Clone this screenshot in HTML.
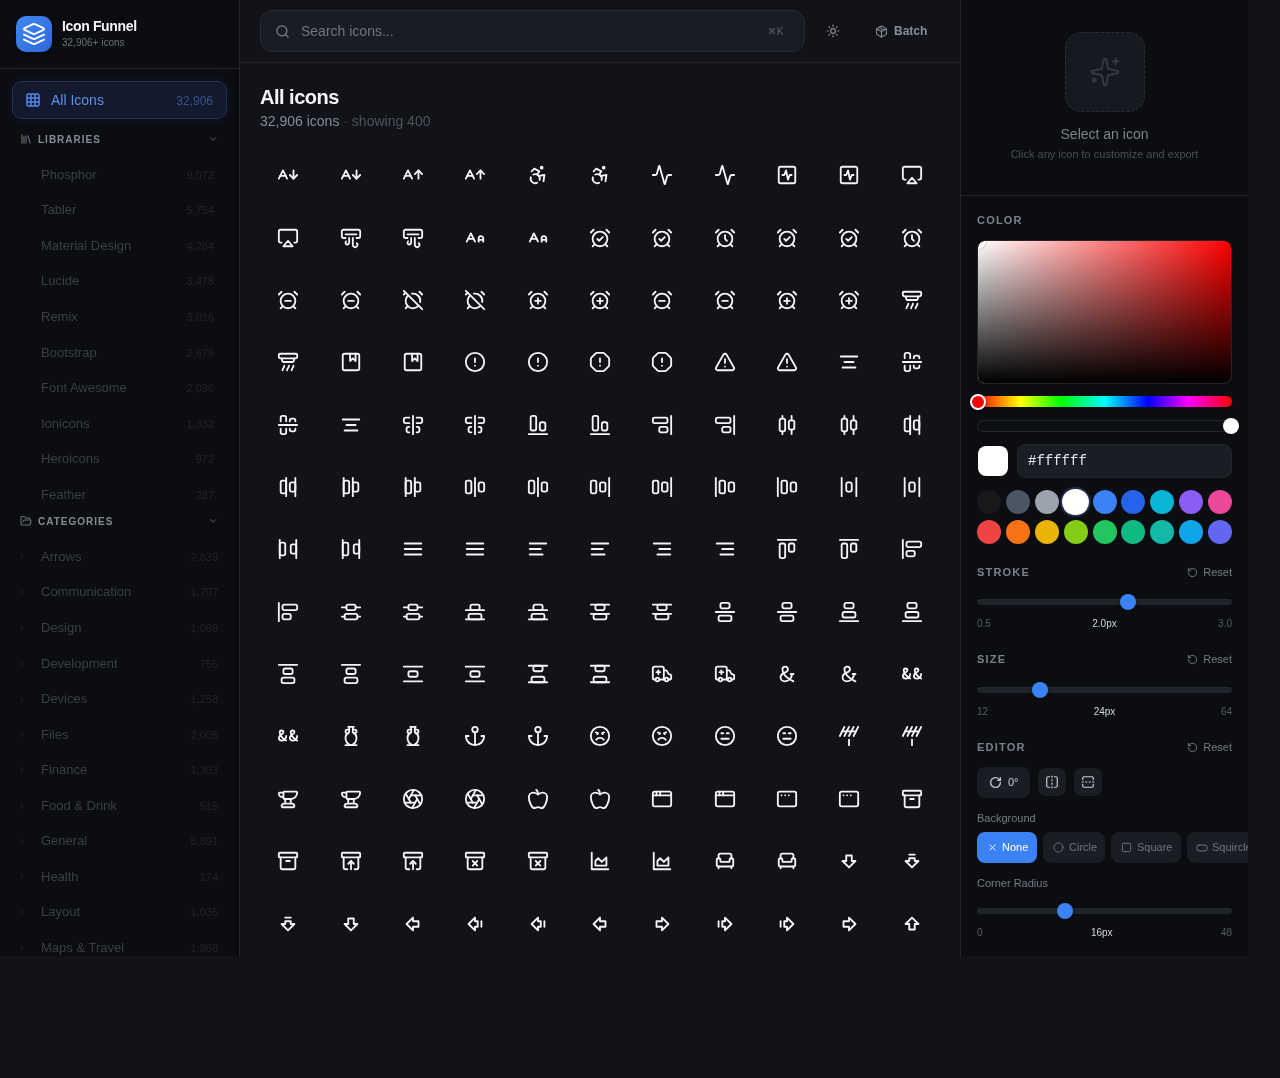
<!DOCTYPE html><html><head><meta charset="utf-8"><style>
*{box-sizing:border-box;margin:0;padding:0}
html,body{width:1280px;height:1078px;overflow:hidden;background:#121318;font-family:"Liberation Sans",sans-serif;color:#e5e7eb}
.app{position:absolute;left:0;top:0;width:1248px;height:956px;overflow:hidden;will-change:transform}
.side{position:absolute;left:0;top:0;width:240px;height:956px;background:#0c0d11;border-right:1px solid #23252b;overflow:hidden}
.shead{position:absolute;left:0;top:0;width:239px;height:69px;border-bottom:1px solid #23252b}
.logo{position:absolute;left:16px;top:16px;width:36px;height:36px;border-radius:10px;background:linear-gradient(135deg,#3f86f0,#2f68d8);box-shadow:0 2px 6px rgba(0,0,0,.5);display:flex;align-items:center;justify-content:center;color:#fff}
.ttl{position:absolute;left:62px;top:18px;font-size:14px;font-weight:700;color:#f3f4f6;line-height:16px;letter-spacing:-0.35px}
.sub{position:absolute;left:62px;top:37px;font-size:10px;color:#6b6f79;line-height:12px}
.allbtn{position:absolute;left:12px;top:81px;width:215px;height:38px;border-radius:10px;background:#131a2d;border:1px solid #263352;box-shadow:0 0 12px rgba(37,99,235,.12)}
.allbtn svg{position:absolute;left:12px;top:10px}
.allbtn .t{position:absolute;left:38px;top:10px;font-size:14px;color:#5b8ff0;line-height:16px}
.allbtn .c{position:absolute;right:13px;top:13px;font-size:12px;color:#36528a;line-height:13px}
.sech{position:absolute;left:20px;width:200px;height:16px}
.sech svg.i{position:absolute;left:0;top:2px}
.sech .t{position:absolute;left:18px;top:2px;font-size:10px;font-weight:700;letter-spacing:1px;color:#868a94;line-height:12px}
.sech svg.ch{position:absolute;left:188px;top:2px}
.row{position:absolute;left:0;width:239px;height:35.5px}
.row .t{position:absolute;left:41px;top:9px;font-size:13px;color:#3b3e45;line-height:16px;white-space:nowrap}
.row .c{position:absolute;top:11px;font-size:11px;color:#212328;line-height:13px}
.row svg{position:absolute;left:18px;top:13px}
.main{position:absolute;left:240px;top:0;width:720px;height:956px;background:#121318;overflow:hidden}
.top{position:absolute;left:0;top:0;width:720px;height:63px;border-bottom:1px solid #23252b}
.search{position:absolute;left:20px;top:10px;width:545px;height:42px;border-radius:12px;background:#1a1c23;border:1px solid #272930}
.search svg{position:absolute;left:14px;top:13px}
.search .ph{position:absolute;left:40px;top:12px;font-size:14px;color:#71757f;line-height:16px}
.search .k{position:absolute;right:20px;top:15px;font-size:10px;color:#5b5f69;line-height:12px;letter-spacing:.5px}
.sun{position:absolute;left:586px;top:24px;color:#8a8e98}
.batch{position:absolute;left:635px;top:24px;color:#8a8e98}
.batch .t{position:absolute;left:19px;top:0px;font-size:12px;font-weight:700;line-height:14px}
h1{position:absolute;left:20px;top:83px;font-size:20px;line-height:28px;font-weight:700;color:#f3f4f6;letter-spacing:-0.5px}
.cnt{position:absolute;left:20px;top:111px;font-size:14px;line-height:20px;color:#878b95;white-space:nowrap}
.cnt span{color:#4f535a}
.grid{position:absolute;left:20px;top:147px;width:680px}
.ic{position:absolute;width:22px;height:22px;color:#f5f5f7}
.ic svg{display:block}
.panel{position:absolute;left:960px;top:0;width:288px;height:956px;background:#0c0d11;border-left:1px solid #23252b;overflow:hidden}
.prev{position:absolute;left:0;top:0;width:287px;height:196px;border-bottom:1px solid #23252b}
.pbox{position:absolute;left:104px;top:32px;width:80px;height:80px;border-radius:16px;background:#161920;border:1px dashed #2b2e37;color:#3b3e48}
.pbox svg{position:absolute;left:23px;top:23px}
.sel{position:absolute;left:0;width:287px;text-align:center;top:125px;font-size:14px;line-height:18px;color:#7e828d}
.clk{position:absolute;left:0;width:287px;text-align:center;top:147px;font-size:11px;line-height:14px;color:#4a4e57}
.lbl{position:absolute;left:16px;font-size:11px;font-weight:700;letter-spacing:1.2px;color:#7d818b;line-height:13px}
.reset{position:absolute;right:16px;font-size:11px;color:#757983;line-height:13px}
.reset svg{position:absolute;left:-16px;top:1px}
.sat{position:absolute;left:16px;top:240px;width:255px;height:144px;border-radius:8px;overflow:hidden;border:1px solid #2a2226;background:linear-gradient(to top,#000,rgba(0,0,0,0)),linear-gradient(to right,#fff,#f00);background-origin:padding-box;background-clip:padding-box}
.hue{position:absolute;left:16px;top:396px;width:255px;height:11px;border-radius:6px;background:linear-gradient(to right,#f00 0%,#ff0 17%,#0f0 33%,#0ff 50%,#00f 67%,#f0f 83%,#f00 100%)}
.hknob{position:absolute;left:9px;top:394px;width:16px;height:16px;border-radius:50%;background:#f00;border:2px solid #fff;box-shadow:0 1px 3px rgba(0,0,0,.5)}
.alpha{position:absolute;left:16px;top:420px;width:255px;height:12px;border-radius:6px;background:#0e0f13;border:1px solid #24262d}
.aknob{position:absolute;left:262px;top:418px;width:16px;height:16px;border-radius:50%;background:#fff;box-shadow:0 1px 3px rgba(0,0,0,.5)}
.swatch{position:absolute;left:17px;top:446px;width:30px;height:30px;border-radius:8px;background:#fff}
.hex{position:absolute;left:56px;top:444px;width:215px;height:34px;border-radius:8px;background:#1b1d24;border:1px solid #22242b;font-family:"Liberation Mono",monospace;font-size:14px;color:#e5e7eb;padding-left:10px;line-height:32px}
.sw{position:absolute;width:24px;height:24px;border-radius:50%}
.track{position:absolute;left:16px;width:255px;height:6px;border-radius:3px;background:#22242b}
.knob{position:absolute;width:16px;height:16px;border-radius:50%;background:#3b82f6;box-shadow:0 1px 3px rgba(0,0,0,.4)}
.rng{position:absolute;left:16px;width:255px;display:flex;justify-content:space-between;font-size:10px;line-height:12px;color:#575b65}
.rng b{font-weight:400;color:#d1d5db}
.eb{position:absolute;border-radius:8px;background:#1b1d24;color:#c9ccd3}
.eb svg{position:absolute}
.elbl{position:absolute;left:16px;font-size:11px;color:#767a84;line-height:13px}
.bgb{position:absolute;top:832px;height:31px;border-radius:8px;background:#1b1d24;color:#70747e;font-size:11px;line-height:31px;white-space:nowrap}
.bgb svg{position:absolute;top:10px}
.bgb span{position:absolute;top:0}
</style></head><body><div class="app">
<div class="side"><div class="shead">
<div class="logo"><svg width="24" height="24" viewBox="0 0 24 24" fill="none" stroke="#fff" stroke-width="2" stroke-linecap="round" stroke-linejoin="round" ><path d="m12.83 2.18a2 2 0 0 0-1.66 0L2.6 6.08a1 1 0 0 0 0 1.83l8.58 3.91a2 2 0 0 0 1.66 0l8.58-3.9a1 1 0 0 0 0-1.83Z"/><path d="m22 17.65-9.17 4.16a2 2 0 0 1-1.66 0L2 17.65"/><path d="m22 12.65-9.17 4.16a2 2 0 0 1-1.66 0L2 12.65"/></svg></div>
<div class="ttl">Icon Funnel</div><div class="sub">32,906+ icons</div></div>
<div class="allbtn"><svg width="16" height="16" viewBox="0 0 24 24" fill="none" stroke="#4f86ee" stroke-width="2.2" stroke-linecap="round" stroke-linejoin="round" ><rect width="18" height="18" x="3" y="3" rx="2"/><path d="M3 9h18"/><path d="M3 15h18"/><path d="M9 3v18"/><path d="M15 3v18"/></svg><div class="t">All Icons</div><div class="c">32,906</div></div>
<div class="sech" style="top:132px"><svg width="12" height="12" viewBox="0 0 24 24" fill="none" stroke="#5a5f6b" stroke-width="2.6" stroke-linecap="round" stroke-linejoin="round" class="i" style="top:1px"><path d="m16 6 4 14"/><path d="M12 6v14"/><path d="M8 8v12"/><path d="M4 4v16"/></svg><div class="t">LIBRARIES</div><svg width="10" height="10" viewBox="0 0 24 24" fill="none" stroke="#5d6169" stroke-width="2.4" stroke-linecap="round" stroke-linejoin="round" class="ch"><path d="m6 9 6 6 6-6"/></svg></div>
<div class="row" style="top:157.5px"><div class="t">Phosphor</div><div class="c" style="right:25px">9,072</div></div>
<div class="row" style="top:193.1px"><div class="t">Tabler</div><div class="c" style="right:25px">5,754</div></div>
<div class="row" style="top:228.7px"><div class="t">Material Design</div><div class="c" style="right:25px">4,284</div></div>
<div class="row" style="top:264.3px"><div class="t">Lucide</div><div class="c" style="right:25px">3,478</div></div>
<div class="row" style="top:299.9px"><div class="t">Remix</div><div class="c" style="right:25px">3,016</div></div>
<div class="row" style="top:335.5px"><div class="t">Bootstrap</div><div class="c" style="right:25px">2,679</div></div>
<div class="row" style="top:371.1px"><div class="t">Font Awesome</div><div class="c" style="right:25px">2,036</div></div>
<div class="row" style="top:406.70000000000005px"><div class="t">Ionicons</div><div class="c" style="right:25px">1,332</div></div>
<div class="row" style="top:442.3px"><div class="t">Heroicons</div><div class="c" style="right:25px">972</div></div>
<div class="row" style="top:477.90000000000003px"><div class="t">Feather</div><div class="c" style="right:25px">287</div></div>
<div class="sech" style="top:514px"><svg width="12" height="12" viewBox="0 0 24 24" fill="none" stroke="#6a6e78" stroke-width="2.2" stroke-linecap="round" stroke-linejoin="round" class="i" style="top:1px"><path d="m6 14 1.5-2.9A2 2 0 0 1 9.24 10H20a2 2 0 0 1 1.94 2.5l-1.54 6a2 2 0 0 1-1.95 1.5H4a2 2 0 0 1-2-2V5a2 2 0 0 1 2-2h3.9a2 2 0 0 1 1.69.9l.81 1.2a2 2 0 0 0 1.67.9H18a2 2 0 0 1 2 2v2"/></svg><div class="t">CATEGORIES</div><svg width="10" height="10" viewBox="0 0 24 24" fill="none" stroke="#5d6169" stroke-width="2.4" stroke-linecap="round" stroke-linejoin="round" class="ch"><path d="m6 9 6 6 6-6"/></svg></div>
<div class="row" style="top:539.9px"><svg width="8" height="8" viewBox="0 0 24 24" fill="none" stroke="#2a2c33" stroke-width="2" stroke-linecap="round" stroke-linejoin="round" ><path d="m9 18 6-6-6-6"/></svg><div class="t">Arrows</div><div class="c" style="right:21px">2,839</div></div>
<div class="row" style="top:575.4499999999999px"><svg width="8" height="8" viewBox="0 0 24 24" fill="none" stroke="#2a2c33" stroke-width="2" stroke-linecap="round" stroke-linejoin="round" ><path d="m9 18 6-6-6-6"/></svg><div class="t">Communication</div><div class="c" style="right:21px">1,707</div></div>
<div class="row" style="top:611.0px"><svg width="8" height="8" viewBox="0 0 24 24" fill="none" stroke="#2a2c33" stroke-width="2" stroke-linecap="round" stroke-linejoin="round" ><path d="m9 18 6-6-6-6"/></svg><div class="t">Design</div><div class="c" style="right:21px">1,009</div></div>
<div class="row" style="top:646.55px"><svg width="8" height="8" viewBox="0 0 24 24" fill="none" stroke="#2a2c33" stroke-width="2" stroke-linecap="round" stroke-linejoin="round" ><path d="m9 18 6-6-6-6"/></svg><div class="t">Development</div><div class="c" style="right:21px">755</div></div>
<div class="row" style="top:682.0999999999999px"><svg width="8" height="8" viewBox="0 0 24 24" fill="none" stroke="#2a2c33" stroke-width="2" stroke-linecap="round" stroke-linejoin="round" ><path d="m9 18 6-6-6-6"/></svg><div class="t">Devices</div><div class="c" style="right:21px">1,258</div></div>
<div class="row" style="top:717.65px"><svg width="8" height="8" viewBox="0 0 24 24" fill="none" stroke="#2a2c33" stroke-width="2" stroke-linecap="round" stroke-linejoin="round" ><path d="m9 18 6-6-6-6"/></svg><div class="t">Files</div><div class="c" style="right:21px">2,005</div></div>
<div class="row" style="top:753.1999999999999px"><svg width="8" height="8" viewBox="0 0 24 24" fill="none" stroke="#2a2c33" stroke-width="2" stroke-linecap="round" stroke-linejoin="round" ><path d="m9 18 6-6-6-6"/></svg><div class="t">Finance</div><div class="c" style="right:21px">1,303</div></div>
<div class="row" style="top:788.75px"><svg width="8" height="8" viewBox="0 0 24 24" fill="none" stroke="#2a2c33" stroke-width="2" stroke-linecap="round" stroke-linejoin="round" ><path d="m9 18 6-6-6-6"/></svg><div class="t">Food &amp; Drink</div><div class="c" style="right:21px">515</div></div>
<div class="row" style="top:824.3px"><svg width="8" height="8" viewBox="0 0 24 24" fill="none" stroke="#2a2c33" stroke-width="2" stroke-linecap="round" stroke-linejoin="round" ><path d="m9 18 6-6-6-6"/></svg><div class="t">General</div><div class="c" style="right:21px">8,891</div></div>
<div class="row" style="top:859.8499999999999px"><svg width="8" height="8" viewBox="0 0 24 24" fill="none" stroke="#2a2c33" stroke-width="2" stroke-linecap="round" stroke-linejoin="round" ><path d="m9 18 6-6-6-6"/></svg><div class="t">Health</div><div class="c" style="right:21px">174</div></div>
<div class="row" style="top:895.4px"><svg width="8" height="8" viewBox="0 0 24 24" fill="none" stroke="#2a2c33" stroke-width="2" stroke-linecap="round" stroke-linejoin="round" ><path d="m9 18 6-6-6-6"/></svg><div class="t">Layout</div><div class="c" style="right:21px">1,035</div></div>
<div class="row" style="top:930.9499999999999px"><svg width="8" height="8" viewBox="0 0 24 24" fill="none" stroke="#2a2c33" stroke-width="2" stroke-linecap="round" stroke-linejoin="round" ><path d="m9 18 6-6-6-6"/></svg><div class="t">Maps &amp; Travel</div><div class="c" style="right:21px">1,868</div></div>
<div style="position:absolute;left:234px;top:69px;width:5px;height:887px;background:#0a0b0d"></div>
</div>
<div class="main"><div class="top">
<div class="search"><svg width="15" height="15" viewBox="0 0 24 24" fill="none" stroke="#7c808a" stroke-width="2" stroke-linecap="round" stroke-linejoin="round" ><circle cx="11" cy="11" r="8"/><path d="m21 21-4.3-4.3"/></svg><div class="ph">Search icons...</div><div class="k"><span style="font-size:7.5px;vertical-align:1px">&#8984;</span>K</div></div>
<div class="sun"><svg width="14" height="14" viewBox="0 0 24 24" fill="none" stroke="#8a8e98" stroke-width="2" stroke-linecap="round" stroke-linejoin="round" ><circle cx="12" cy="12" r="4"/><path d="M12 2v2"/><path d="M12 20v2"/><path d="m4.93 4.93 1.41 1.41"/><path d="m17.66 17.66 1.41 1.41"/><path d="M2 12h2"/><path d="M20 12h2"/><path d="m6.34 17.66-1.41 1.41"/><path d="m19.07 4.93-1.41 1.41"/></svg></div>
<div class="batch"><svg width="13" height="13" viewBox="0 0 24 24" fill="none" stroke="#8a8e98" stroke-width="2" stroke-linecap="round" stroke-linejoin="round" ><path d="m7.5 4.27 9 5.15"/><path d="M21 8a2 2 0 0 0-1-1.73l-7-4a2 2 0 0 0-2 0l-7 4A2 2 0 0 0 3 8v8a2 2 0 0 0 1 1.73l7 4a2 2 0 0 0 2 0l7-4A2 2 0 0 0 21 16Z"/><path d="m3.3 7 8.7 5 8.7-5"/><path d="M12 22V12"/></svg><div class="t">Batch</div></div>
</div>
<h1>All icons</h1><div class="cnt">32,906 icons<span style="color:#3a3d44"> &middot; </span><span>showing 400</span></div>
<div class="grid">
<div class="ic" style="left:17.18px;top:17.18px"><svg width="22" height="22" viewBox="0 0 24 24" fill="none" stroke="currentColor" stroke-width="2" stroke-linecap="round" stroke-linejoin="round" ><path d="M3.5 13h6"/><path d="m2 16 4.5-9 4.5 9"/><path d="M18 7v9"/><path d="m14 12 4 4 4-4"/></svg></div>
<div class="ic" style="left:79.55px;top:17.18px"><svg width="22" height="22" viewBox="0 0 24 24" fill="none" stroke="currentColor" stroke-width="2" stroke-linecap="round" stroke-linejoin="round" ><path d="M3.5 13h6"/><path d="m2 16 4.5-9 4.5 9"/><path d="M18 7v9"/><path d="m14 12 4 4 4-4"/></svg></div>
<div class="ic" style="left:141.91px;top:17.18px"><svg width="22" height="22" viewBox="0 0 24 24" fill="none" stroke="currentColor" stroke-width="2" stroke-linecap="round" stroke-linejoin="round" ><path d="M3.5 13h6"/><path d="m2 16 4.5-9 4.5 9"/><path d="M18 16V7"/><path d="m14 11 4-4 4 4"/></svg></div>
<div class="ic" style="left:204.27px;top:17.18px"><svg width="22" height="22" viewBox="0 0 24 24" fill="none" stroke="currentColor" stroke-width="2" stroke-linecap="round" stroke-linejoin="round" ><path d="M3.5 13h6"/><path d="m2 16 4.5-9 4.5 9"/><path d="M18 16V7"/><path d="m14 11 4-4 4 4"/></svg></div>
<div class="ic" style="left:266.64px;top:17.18px"><svg width="22" height="22" viewBox="0 0 24 24" fill="none" stroke="currentColor" stroke-width="2" stroke-linecap="round" stroke-linejoin="round" ><circle cx="16" cy="4" r="1"/><path d="m18 19 1-7-6 1"/><path d="m5 8 3-3 5.5 3-2.36 3.5"/><path d="M4.24 14.5a5 5 0 0 0 6.88 6"/><path d="M13.76 17.5a5 5 0 0 0-6.88-6"/></svg></div>
<div class="ic" style="left:329.00px;top:17.18px"><svg width="22" height="22" viewBox="0 0 24 24" fill="none" stroke="currentColor" stroke-width="2" stroke-linecap="round" stroke-linejoin="round" ><circle cx="16" cy="4" r="1"/><path d="m18 19 1-7-6 1"/><path d="m5 8 3-3 5.5 3-2.36 3.5"/><path d="M4.24 14.5a5 5 0 0 0 6.88 6"/><path d="M13.76 17.5a5 5 0 0 0-6.88-6"/></svg></div>
<div class="ic" style="left:391.36px;top:17.18px"><svg width="22" height="22" viewBox="0 0 24 24" fill="none" stroke="currentColor" stroke-width="2" stroke-linecap="round" stroke-linejoin="round" ><path d="M22 12h-2.48a2 2 0 0 0-1.93 1.46l-2.35 8.36a.25.25 0 0 1-.48 0L9.24 2.18a.25.25 0 0 0-.48 0l-2.35 8.36A2 2 0 0 1 4.49 12H2"/></svg></div>
<div class="ic" style="left:453.73px;top:17.18px"><svg width="22" height="22" viewBox="0 0 24 24" fill="none" stroke="currentColor" stroke-width="2" stroke-linecap="round" stroke-linejoin="round" ><path d="M22 12h-2.48a2 2 0 0 0-1.93 1.46l-2.35 8.36a.25.25 0 0 1-.48 0L9.24 2.18a.25.25 0 0 0-.48 0l-2.35 8.36A2 2 0 0 1 4.49 12H2"/></svg></div>
<div class="ic" style="left:516.09px;top:17.18px"><svg width="22" height="22" viewBox="0 0 24 24" fill="none" stroke="currentColor" stroke-width="2" stroke-linecap="round" stroke-linejoin="round" ><rect width="18" height="18" x="3" y="3" rx="2"/><path d="M17 12h-2l-2 5-2-10-2 5H7"/></svg></div>
<div class="ic" style="left:578.45px;top:17.18px"><svg width="22" height="22" viewBox="0 0 24 24" fill="none" stroke="currentColor" stroke-width="2" stroke-linecap="round" stroke-linejoin="round" ><rect width="18" height="18" x="3" y="3" rx="2"/><path d="M17 12h-2l-2 5-2-10-2 5H7"/></svg></div>
<div class="ic" style="left:640.82px;top:17.18px"><svg width="22" height="22" viewBox="0 0 24 24" fill="none" stroke="currentColor" stroke-width="2" stroke-linecap="round" stroke-linejoin="round" ><path d="M5 17H4a2 2 0 0 1-2-2V5a2 2 0 0 1 2-2h16a2 2 0 0 1 2 2v10a2 2 0 0 1-2 2h-1"/><path d="m12 15 5 6H7Z"/></svg></div>
<div class="ic" style="left:17.18px;top:79.55px"><svg width="22" height="22" viewBox="0 0 24 24" fill="none" stroke="currentColor" stroke-width="2" stroke-linecap="round" stroke-linejoin="round" ><path d="M5 17H4a2 2 0 0 1-2-2V5a2 2 0 0 1 2-2h16a2 2 0 0 1 2 2v10a2 2 0 0 1-2 2h-1"/><path d="m12 15 5 6H7Z"/></svg></div>
<div class="ic" style="left:79.55px;top:79.55px"><svg width="22" height="22" viewBox="0 0 24 24" fill="none" stroke="currentColor" stroke-width="2" stroke-linecap="round" stroke-linejoin="round" ><path d="M6 12H4a2 2 0 0 1-2-2V5a2 2 0 0 1 2-2h16a2 2 0 0 1 2 2v5a2 2 0 0 1-2 2h-2"/><path d="M6 8h12"/><path d="M18.3 17.7a2.5 2.5 0 0 1-3.16 3.83 2.53 2.53 0 0 1-1.14-2V12"/><path d="M6.6 15.6A2 2 0 1 0 10 17v-5"/></svg></div>
<div class="ic" style="left:141.91px;top:79.55px"><svg width="22" height="22" viewBox="0 0 24 24" fill="none" stroke="currentColor" stroke-width="2" stroke-linecap="round" stroke-linejoin="round" ><path d="M6 12H4a2 2 0 0 1-2-2V5a2 2 0 0 1 2-2h16a2 2 0 0 1 2 2v5a2 2 0 0 1-2 2h-2"/><path d="M6 8h12"/><path d="M18.3 17.7a2.5 2.5 0 0 1-3.16 3.83 2.53 2.53 0 0 1-1.14-2V12"/><path d="M6.6 15.6A2 2 0 1 0 10 17v-5"/></svg></div>
<div class="ic" style="left:204.27px;top:79.55px"><svg width="22" height="22" viewBox="0 0 24 24" fill="none" stroke="currentColor" stroke-width="2" stroke-linecap="round" stroke-linejoin="round" ><path d="M21 14h-5"/><path d="M16 16v-3.5a2.5 2.5 0 0 1 5 0V16"/><path d="M4.5 13h6"/><path d="m3 16 4.5-9 4.5 9"/></svg></div>
<div class="ic" style="left:266.64px;top:79.55px"><svg width="22" height="22" viewBox="0 0 24 24" fill="none" stroke="currentColor" stroke-width="2" stroke-linecap="round" stroke-linejoin="round" ><path d="M21 14h-5"/><path d="M16 16v-3.5a2.5 2.5 0 0 1 5 0V16"/><path d="M4.5 13h6"/><path d="m3 16 4.5-9 4.5 9"/></svg></div>
<div class="ic" style="left:329.00px;top:79.55px"><svg width="22" height="22" viewBox="0 0 24 24" fill="none" stroke="currentColor" stroke-width="2" stroke-linecap="round" stroke-linejoin="round" ><circle cx="12" cy="13" r="8"/><path d="m9 13 2 2 4-4"/><path d="M5 3 2 6"/><path d="m22 6-3-3"/><path d="M6.38 18.7 4 21"/><path d="M17.64 18.67 20 21"/></svg></div>
<div class="ic" style="left:391.36px;top:79.55px"><svg width="22" height="22" viewBox="0 0 24 24" fill="none" stroke="currentColor" stroke-width="2" stroke-linecap="round" stroke-linejoin="round" ><circle cx="12" cy="13" r="8"/><path d="m9 13 2 2 4-4"/><path d="M5 3 2 6"/><path d="m22 6-3-3"/><path d="M6.38 18.7 4 21"/><path d="M17.64 18.67 20 21"/></svg></div>
<div class="ic" style="left:453.73px;top:79.55px"><svg width="22" height="22" viewBox="0 0 24 24" fill="none" stroke="currentColor" stroke-width="2" stroke-linecap="round" stroke-linejoin="round" ><circle cx="12" cy="13" r="8"/><path d="M12 9v4l2 2"/><path d="M5 3 2 6"/><path d="m22 6-3-3"/><path d="M6.38 18.7 4 21"/><path d="M17.64 18.67 20 21"/></svg></div>
<div class="ic" style="left:516.09px;top:79.55px"><svg width="22" height="22" viewBox="0 0 24 24" fill="none" stroke="currentColor" stroke-width="2" stroke-linecap="round" stroke-linejoin="round" ><circle cx="12" cy="13" r="8"/><path d="m9 13 2 2 4-4"/><path d="M5 3 2 6"/><path d="m22 6-3-3"/><path d="M6.38 18.7 4 21"/><path d="M17.64 18.67 20 21"/></svg></div>
<div class="ic" style="left:578.45px;top:79.55px"><svg width="22" height="22" viewBox="0 0 24 24" fill="none" stroke="currentColor" stroke-width="2" stroke-linecap="round" stroke-linejoin="round" ><circle cx="12" cy="13" r="8"/><path d="m9 13 2 2 4-4"/><path d="M5 3 2 6"/><path d="m22 6-3-3"/><path d="M6.38 18.7 4 21"/><path d="M17.64 18.67 20 21"/></svg></div>
<div class="ic" style="left:640.82px;top:79.55px"><svg width="22" height="22" viewBox="0 0 24 24" fill="none" stroke="currentColor" stroke-width="2" stroke-linecap="round" stroke-linejoin="round" ><circle cx="12" cy="13" r="8"/><path d="M12 9v4l2 2"/><path d="M5 3 2 6"/><path d="m22 6-3-3"/><path d="M6.38 18.7 4 21"/><path d="M17.64 18.67 20 21"/></svg></div>
<div class="ic" style="left:17.18px;top:141.91px"><svg width="22" height="22" viewBox="0 0 24 24" fill="none" stroke="currentColor" stroke-width="2" stroke-linecap="round" stroke-linejoin="round" ><circle cx="12" cy="13" r="8"/><path d="M9 13h6"/><path d="M5 3 2 6"/><path d="m22 6-3-3"/><path d="M6.38 18.7 4 21"/><path d="M17.64 18.67 20 21"/></svg></div>
<div class="ic" style="left:79.55px;top:141.91px"><svg width="22" height="22" viewBox="0 0 24 24" fill="none" stroke="currentColor" stroke-width="2" stroke-linecap="round" stroke-linejoin="round" ><circle cx="12" cy="13" r="8"/><path d="M9 13h6"/><path d="M5 3 2 6"/><path d="m22 6-3-3"/><path d="M6.38 18.7 4 21"/><path d="M17.64 18.67 20 21"/></svg></div>
<div class="ic" style="left:141.91px;top:141.91px"><svg width="22" height="22" viewBox="0 0 24 24" fill="none" stroke="currentColor" stroke-width="2" stroke-linecap="round" stroke-linejoin="round" ><path d="M6.87 6.87a8 8 0 1 0 11.26 11.26"/><path d="M19.9 14.25a8 8 0 0 0-9.15-9.15"/><path d="m22 6-3-3"/><path d="M6.26 18.67 4 21"/><path d="m2 2 20 20"/><path d="M4 4 2 6"/></svg></div>
<div class="ic" style="left:204.27px;top:141.91px"><svg width="22" height="22" viewBox="0 0 24 24" fill="none" stroke="currentColor" stroke-width="2" stroke-linecap="round" stroke-linejoin="round" ><path d="M6.87 6.87a8 8 0 1 0 11.26 11.26"/><path d="M19.9 14.25a8 8 0 0 0-9.15-9.15"/><path d="m22 6-3-3"/><path d="M6.26 18.67 4 21"/><path d="m2 2 20 20"/><path d="M4 4 2 6"/></svg></div>
<div class="ic" style="left:266.64px;top:141.91px"><svg width="22" height="22" viewBox="0 0 24 24" fill="none" stroke="currentColor" stroke-width="2" stroke-linecap="round" stroke-linejoin="round" ><circle cx="12" cy="13" r="8"/><path d="M12 10v6"/><path d="M9 13h6"/><path d="M5 3 2 6"/><path d="m22 6-3-3"/><path d="M6.38 18.7 4 21"/><path d="M17.64 18.67 20 21"/></svg></div>
<div class="ic" style="left:329.00px;top:141.91px"><svg width="22" height="22" viewBox="0 0 24 24" fill="none" stroke="currentColor" stroke-width="2" stroke-linecap="round" stroke-linejoin="round" ><circle cx="12" cy="13" r="8"/><path d="M12 10v6"/><path d="M9 13h6"/><path d="M5 3 2 6"/><path d="m22 6-3-3"/><path d="M6.38 18.7 4 21"/><path d="M17.64 18.67 20 21"/></svg></div>
<div class="ic" style="left:391.36px;top:141.91px"><svg width="22" height="22" viewBox="0 0 24 24" fill="none" stroke="currentColor" stroke-width="2" stroke-linecap="round" stroke-linejoin="round" ><circle cx="12" cy="13" r="8"/><path d="M9 13h6"/><path d="M5 3 2 6"/><path d="m22 6-3-3"/><path d="M6.38 18.7 4 21"/><path d="M17.64 18.67 20 21"/></svg></div>
<div class="ic" style="left:453.73px;top:141.91px"><svg width="22" height="22" viewBox="0 0 24 24" fill="none" stroke="currentColor" stroke-width="2" stroke-linecap="round" stroke-linejoin="round" ><circle cx="12" cy="13" r="8"/><path d="M9 13h6"/><path d="M5 3 2 6"/><path d="m22 6-3-3"/><path d="M6.38 18.7 4 21"/><path d="M17.64 18.67 20 21"/></svg></div>
<div class="ic" style="left:516.09px;top:141.91px"><svg width="22" height="22" viewBox="0 0 24 24" fill="none" stroke="currentColor" stroke-width="2" stroke-linecap="round" stroke-linejoin="round" ><circle cx="12" cy="13" r="8"/><path d="M12 10v6"/><path d="M9 13h6"/><path d="M5 3 2 6"/><path d="m22 6-3-3"/><path d="M6.38 18.7 4 21"/><path d="M17.64 18.67 20 21"/></svg></div>
<div class="ic" style="left:578.45px;top:141.91px"><svg width="22" height="22" viewBox="0 0 24 24" fill="none" stroke="currentColor" stroke-width="2" stroke-linecap="round" stroke-linejoin="round" ><circle cx="12" cy="13" r="8"/><path d="M12 10v6"/><path d="M9 13h6"/><path d="M5 3 2 6"/><path d="m22 6-3-3"/><path d="M6.38 18.7 4 21"/><path d="M17.64 18.67 20 21"/></svg></div>
<div class="ic" style="left:640.82px;top:141.91px"><svg width="22" height="22" viewBox="0 0 24 24" fill="none" stroke="currentColor" stroke-width="2" stroke-linecap="round" stroke-linejoin="round" ><path d="M11 21c0-2.5 2-2.5 2-5"/><path d="M16 21c0-2.5 2-2.5 2-5"/><path d="m19 8-.8 3a1.25 1.25 0 0 1-1.2 1H7a1.25 1.25 0 0 1-1.2-1L5 8"/><path d="M21 3a1 1 0 0 1 1 1v2a2 2 0 0 1-2 2H4a2 2 0 0 1-2-2V4a1 1 0 0 1 1-1z"/><path d="M6 21c0-2.5 2-2.5 2-5"/></svg></div>
<div class="ic" style="left:17.18px;top:204.27px"><svg width="22" height="22" viewBox="0 0 24 24" fill="none" stroke="currentColor" stroke-width="2" stroke-linecap="round" stroke-linejoin="round" ><path d="M11 21c0-2.5 2-2.5 2-5"/><path d="M16 21c0-2.5 2-2.5 2-5"/><path d="m19 8-.8 3a1.25 1.25 0 0 1-1.2 1H7a1.25 1.25 0 0 1-1.2-1L5 8"/><path d="M21 3a1 1 0 0 1 1 1v2a2 2 0 0 1-2 2H4a2 2 0 0 1-2-2V4a1 1 0 0 1 1-1z"/><path d="M6 21c0-2.5 2-2.5 2-5"/></svg></div>
<div class="ic" style="left:79.55px;top:204.27px"><svg width="22" height="22" viewBox="0 0 24 24" fill="none" stroke="currentColor" stroke-width="2" stroke-linecap="round" stroke-linejoin="round" ><rect width="18" height="18" x="3" y="3" rx="2" ry="2"/><polyline points="11 3 11 11 14 8 17 11 17 3"/></svg></div>
<div class="ic" style="left:141.91px;top:204.27px"><svg width="22" height="22" viewBox="0 0 24 24" fill="none" stroke="currentColor" stroke-width="2" stroke-linecap="round" stroke-linejoin="round" ><rect width="18" height="18" x="3" y="3" rx="2" ry="2"/><polyline points="11 3 11 11 14 8 17 11 17 3"/></svg></div>
<div class="ic" style="left:204.27px;top:204.27px"><svg width="22" height="22" viewBox="0 0 24 24" fill="none" stroke="currentColor" stroke-width="2" stroke-linecap="round" stroke-linejoin="round" ><circle cx="12" cy="12" r="10"/><line x1="12" x2="12" y1="8" y2="12"/><line x1="12" x2="12.01" y1="16" y2="16"/></svg></div>
<div class="ic" style="left:266.64px;top:204.27px"><svg width="22" height="22" viewBox="0 0 24 24" fill="none" stroke="currentColor" stroke-width="2" stroke-linecap="round" stroke-linejoin="round" ><circle cx="12" cy="12" r="10"/><line x1="12" x2="12" y1="8" y2="12"/><line x1="12" x2="12.01" y1="16" y2="16"/></svg></div>
<div class="ic" style="left:329.00px;top:204.27px"><svg width="22" height="22" viewBox="0 0 24 24" fill="none" stroke="currentColor" stroke-width="2" stroke-linecap="round" stroke-linejoin="round" ><path d="M12 16h.01"/><path d="M12 8v4"/><path d="M15.312 2a2 2 0 0 1 1.414.586l4.688 4.688A2 2 0 0 1 22 8.688v6.624a2 2 0 0 1-.586 1.414l-4.688 4.688a2 2 0 0 1-1.414.586H8.688a2 2 0 0 1-1.414-.586l-4.688-4.688A2 2 0 0 1 2 15.312V8.688a2 2 0 0 1 .586-1.414l4.688-4.688A2 2 0 0 1 8.688 2z"/></svg></div>
<div class="ic" style="left:391.36px;top:204.27px"><svg width="22" height="22" viewBox="0 0 24 24" fill="none" stroke="currentColor" stroke-width="2" stroke-linecap="round" stroke-linejoin="round" ><path d="M12 16h.01"/><path d="M12 8v4"/><path d="M15.312 2a2 2 0 0 1 1.414.586l4.688 4.688A2 2 0 0 1 22 8.688v6.624a2 2 0 0 1-.586 1.414l-4.688 4.688a2 2 0 0 1-1.414.586H8.688a2 2 0 0 1-1.414-.586l-4.688-4.688A2 2 0 0 1 2 15.312V8.688a2 2 0 0 1 .586-1.414l4.688-4.688A2 2 0 0 1 8.688 2z"/></svg></div>
<div class="ic" style="left:453.73px;top:204.27px"><svg width="22" height="22" viewBox="0 0 24 24" fill="none" stroke="currentColor" stroke-width="2" stroke-linecap="round" stroke-linejoin="round" ><path d="m21.73 18-8-14a2 2 0 0 0-3.48 0l-8 14A2 2 0 0 0 4 21h16a2 2 0 0 0 1.73-3"/><path d="M12 9v4"/><path d="M12 17h.01"/></svg></div>
<div class="ic" style="left:516.09px;top:204.27px"><svg width="22" height="22" viewBox="0 0 24 24" fill="none" stroke="currentColor" stroke-width="2" stroke-linecap="round" stroke-linejoin="round" ><path d="m21.73 18-8-14a2 2 0 0 0-3.48 0l-8 14A2 2 0 0 0 4 21h16a2 2 0 0 0 1.73-3"/><path d="M12 9v4"/><path d="M12 17h.01"/></svg></div>
<div class="ic" style="left:578.45px;top:204.27px"><svg width="22" height="22" viewBox="0 0 24 24" fill="none" stroke="currentColor" stroke-width="2" stroke-linecap="round" stroke-linejoin="round" ><line x1="21" x2="3" y1="6" y2="6"/><line x1="17" x2="7" y1="12" y2="12"/><line x1="19" x2="5" y1="18" y2="18"/></svg></div>
<div class="ic" style="left:640.82px;top:204.27px"><svg width="22" height="22" viewBox="0 0 24 24" fill="none" stroke="currentColor" stroke-width="2" stroke-linecap="round" stroke-linejoin="round" ><path d="M2 12h20"/><path d="M10 16v4a2 2 0 0 1-2 2H6a2 2 0 0 1-2-2v-4"/><path d="M10 8V4a2 2 0 0 0-2-2H6a2 2 0 0 0-2 2v4"/><path d="M20 16v1a2 2 0 0 1-2 2h-2a2 2 0 0 1-2-2v-1"/><path d="M14 8V7c0-1.1.9-2 2-2h2a2 2 0 0 1 2 2v1"/></svg></div>
<div class="ic" style="left:17.18px;top:266.64px"><svg width="22" height="22" viewBox="0 0 24 24" fill="none" stroke="currentColor" stroke-width="2" stroke-linecap="round" stroke-linejoin="round" ><path d="M2 12h20"/><path d="M10 16v4a2 2 0 0 1-2 2H6a2 2 0 0 1-2-2v-4"/><path d="M10 8V4a2 2 0 0 0-2-2H6a2 2 0 0 0-2 2v4"/><path d="M20 16v1a2 2 0 0 1-2 2h-2a2 2 0 0 1-2-2v-1"/><path d="M14 8V7c0-1.1.9-2 2-2h2a2 2 0 0 1 2 2v1"/></svg></div>
<div class="ic" style="left:79.55px;top:266.64px"><svg width="22" height="22" viewBox="0 0 24 24" fill="none" stroke="currentColor" stroke-width="2" stroke-linecap="round" stroke-linejoin="round" ><line x1="21" x2="3" y1="6" y2="6"/><line x1="17" x2="7" y1="12" y2="12"/><line x1="19" x2="5" y1="18" y2="18"/></svg></div>
<div class="ic" style="left:141.91px;top:266.64px"><svg width="22" height="22" viewBox="0 0 24 24" fill="none" stroke="currentColor" stroke-width="2" stroke-linecap="round" stroke-linejoin="round" ><path d="M12 2v20"/><path d="M8 10H4a2 2 0 0 1-2-2V6c0-1.1.9-2 2-2h4"/><path d="M16 10h4a2 2 0 0 0 2-2V6a2 2 0 0 0-2-2h-4"/><path d="M8 20H7a2 2 0 0 1-2-2v-2c0-1.1.9-2 2-2h1"/><path d="M16 14h1a2 2 0 0 1 2 2v2a2 2 0 0 1-2 2h-1"/></svg></div>
<div class="ic" style="left:204.27px;top:266.64px"><svg width="22" height="22" viewBox="0 0 24 24" fill="none" stroke="currentColor" stroke-width="2" stroke-linecap="round" stroke-linejoin="round" ><path d="M12 2v20"/><path d="M8 10H4a2 2 0 0 1-2-2V6c0-1.1.9-2 2-2h4"/><path d="M16 10h4a2 2 0 0 0 2-2V6a2 2 0 0 0-2-2h-4"/><path d="M8 20H7a2 2 0 0 1-2-2v-2c0-1.1.9-2 2-2h1"/><path d="M16 14h1a2 2 0 0 1 2 2v2a2 2 0 0 1-2 2h-1"/></svg></div>
<div class="ic" style="left:266.64px;top:266.64px"><svg width="22" height="22" viewBox="0 0 24 24" fill="none" stroke="currentColor" stroke-width="2" stroke-linecap="round" stroke-linejoin="round" ><rect width="6" height="16" x="4" y="2" rx="2"/><rect width="6" height="9" x="14" y="9" rx="2"/><path d="M22 22H2"/></svg></div>
<div class="ic" style="left:329.00px;top:266.64px"><svg width="22" height="22" viewBox="0 0 24 24" fill="none" stroke="currentColor" stroke-width="2" stroke-linecap="round" stroke-linejoin="round" ><rect width="6" height="16" x="4" y="2" rx="2"/><rect width="6" height="9" x="14" y="9" rx="2"/><path d="M22 22H2"/></svg></div>
<div class="ic" style="left:391.36px;top:266.64px"><svg width="22" height="22" viewBox="0 0 24 24" fill="none" stroke="currentColor" stroke-width="2" stroke-linecap="round" stroke-linejoin="round" ><rect width="16" height="6" x="2" y="4" rx="2"/><rect width="9" height="6" x="9" y="14" rx="2"/><path d="M22 22V2"/></svg></div>
<div class="ic" style="left:453.73px;top:266.64px"><svg width="22" height="22" viewBox="0 0 24 24" fill="none" stroke="currentColor" stroke-width="2" stroke-linecap="round" stroke-linejoin="round" ><rect width="16" height="6" x="2" y="4" rx="2"/><rect width="9" height="6" x="9" y="14" rx="2"/><path d="M22 22V2"/></svg></div>
<div class="ic" style="left:516.09px;top:266.64px"><svg width="22" height="22" viewBox="0 0 24 24" fill="none" stroke="currentColor" stroke-width="2" stroke-linecap="round" stroke-linejoin="round" ><rect width="6" height="14" x="4" y="5" rx="2"/><rect width="6" height="10" x="14" y="7" rx="2"/><path d="M17 22v-5"/><path d="M17 7V2"/><path d="M7 22v-3"/><path d="M7 5V2"/></svg></div>
<div class="ic" style="left:578.45px;top:266.64px"><svg width="22" height="22" viewBox="0 0 24 24" fill="none" stroke="currentColor" stroke-width="2" stroke-linecap="round" stroke-linejoin="round" ><rect width="6" height="14" x="4" y="5" rx="2"/><rect width="6" height="10" x="14" y="7" rx="2"/><path d="M17 22v-5"/><path d="M17 7V2"/><path d="M7 22v-3"/><path d="M7 5V2"/></svg></div>
<div class="ic" style="left:640.82px;top:266.64px"><svg width="22" height="22" viewBox="0 0 24 24" fill="none" stroke="currentColor" stroke-width="2" stroke-linecap="round" stroke-linejoin="round" ><rect width="6" height="14" x="4" y="5" rx="2"/><rect width="6" height="10" x="14" y="7" rx="2"/><path d="M10 2v20"/><path d="M20 2v20"/></svg></div>
<div class="ic" style="left:17.18px;top:329.00px"><svg width="22" height="22" viewBox="0 0 24 24" fill="none" stroke="currentColor" stroke-width="2" stroke-linecap="round" stroke-linejoin="round" ><rect width="6" height="14" x="4" y="5" rx="2"/><rect width="6" height="10" x="14" y="7" rx="2"/><path d="M10 2v20"/><path d="M20 2v20"/></svg></div>
<div class="ic" style="left:79.55px;top:329.00px"><svg width="22" height="22" viewBox="0 0 24 24" fill="none" stroke="currentColor" stroke-width="2" stroke-linecap="round" stroke-linejoin="round" ><rect width="6" height="14" x="4" y="5" rx="2"/><rect width="6" height="10" x="14" y="7" rx="2"/><path d="M4 2v20"/><path d="M14 2v20"/></svg></div>
<div class="ic" style="left:141.91px;top:329.00px"><svg width="22" height="22" viewBox="0 0 24 24" fill="none" stroke="currentColor" stroke-width="2" stroke-linecap="round" stroke-linejoin="round" ><rect width="6" height="14" x="4" y="5" rx="2"/><rect width="6" height="10" x="14" y="7" rx="2"/><path d="M4 2v20"/><path d="M14 2v20"/></svg></div>
<div class="ic" style="left:204.27px;top:329.00px"><svg width="22" height="22" viewBox="0 0 24 24" fill="none" stroke="currentColor" stroke-width="2" stroke-linecap="round" stroke-linejoin="round" ><rect width="6" height="14" x="2" y="5" rx="2"/><rect width="6" height="10" x="16" y="7" rx="2"/><path d="M12 2v20"/></svg></div>
<div class="ic" style="left:266.64px;top:329.00px"><svg width="22" height="22" viewBox="0 0 24 24" fill="none" stroke="currentColor" stroke-width="2" stroke-linecap="round" stroke-linejoin="round" ><rect width="6" height="14" x="2" y="5" rx="2"/><rect width="6" height="10" x="16" y="7" rx="2"/><path d="M12 2v20"/></svg></div>
<div class="ic" style="left:329.00px;top:329.00px"><svg width="22" height="22" viewBox="0 0 24 24" fill="none" stroke="currentColor" stroke-width="2" stroke-linecap="round" stroke-linejoin="round" ><rect width="6" height="14" x="2" y="5" rx="2"/><rect width="6" height="10" x="12" y="7" rx="2"/><path d="M22 2v20"/></svg></div>
<div class="ic" style="left:391.36px;top:329.00px"><svg width="22" height="22" viewBox="0 0 24 24" fill="none" stroke="currentColor" stroke-width="2" stroke-linecap="round" stroke-linejoin="round" ><rect width="6" height="14" x="2" y="5" rx="2"/><rect width="6" height="10" x="12" y="7" rx="2"/><path d="M22 2v20"/></svg></div>
<div class="ic" style="left:453.73px;top:329.00px"><svg width="22" height="22" viewBox="0 0 24 24" fill="none" stroke="currentColor" stroke-width="2" stroke-linecap="round" stroke-linejoin="round" ><rect width="6" height="14" x="6" y="5" rx="2"/><rect width="6" height="10" x="16" y="7" rx="2"/><path d="M2 2v20"/></svg></div>
<div class="ic" style="left:516.09px;top:329.00px"><svg width="22" height="22" viewBox="0 0 24 24" fill="none" stroke="currentColor" stroke-width="2" stroke-linecap="round" stroke-linejoin="round" ><rect width="6" height="14" x="6" y="5" rx="2"/><rect width="6" height="10" x="16" y="7" rx="2"/><path d="M2 2v20"/></svg></div>
<div class="ic" style="left:578.45px;top:329.00px"><svg width="22" height="22" viewBox="0 0 24 24" fill="none" stroke="currentColor" stroke-width="2" stroke-linecap="round" stroke-linejoin="round" ><rect width="6" height="10" x="9" y="7" rx="2"/><path d="M4 22V2"/><path d="M20 22V2"/></svg></div>
<div class="ic" style="left:640.82px;top:329.00px"><svg width="22" height="22" viewBox="0 0 24 24" fill="none" stroke="currentColor" stroke-width="2" stroke-linecap="round" stroke-linejoin="round" ><rect width="6" height="10" x="9" y="7" rx="2"/><path d="M4 22V2"/><path d="M20 22V2"/></svg></div>
<div class="ic" style="left:17.18px;top:391.36px"><svg width="22" height="22" viewBox="0 0 24 24" fill="none" stroke="currentColor" stroke-width="2" stroke-linecap="round" stroke-linejoin="round" ><rect width="6" height="14" x="3" y="5" rx="2"/><rect width="6" height="10" x="15" y="7" rx="2"/><path d="M3 2v20"/><path d="M21 2v20"/></svg></div>
<div class="ic" style="left:79.55px;top:391.36px"><svg width="22" height="22" viewBox="0 0 24 24" fill="none" stroke="currentColor" stroke-width="2" stroke-linecap="round" stroke-linejoin="round" ><rect width="6" height="14" x="3" y="5" rx="2"/><rect width="6" height="10" x="15" y="7" rx="2"/><path d="M3 2v20"/><path d="M21 2v20"/></svg></div>
<div class="ic" style="left:141.91px;top:391.36px"><svg width="22" height="22" viewBox="0 0 24 24" fill="none" stroke="currentColor" stroke-width="2" stroke-linecap="round" stroke-linejoin="round" ><line x1="3" x2="21" y1="6" y2="6"/><line x1="3" x2="21" y1="12" y2="12"/><line x1="3" x2="21" y1="18" y2="18"/></svg></div>
<div class="ic" style="left:204.27px;top:391.36px"><svg width="22" height="22" viewBox="0 0 24 24" fill="none" stroke="currentColor" stroke-width="2" stroke-linecap="round" stroke-linejoin="round" ><line x1="3" x2="21" y1="6" y2="6"/><line x1="3" x2="21" y1="12" y2="12"/><line x1="3" x2="21" y1="18" y2="18"/></svg></div>
<div class="ic" style="left:266.64px;top:391.36px"><svg width="22" height="22" viewBox="0 0 24 24" fill="none" stroke="currentColor" stroke-width="2" stroke-linecap="round" stroke-linejoin="round" ><line x1="21" x2="3" y1="6" y2="6"/><line x1="15" x2="3" y1="12" y2="12"/><line x1="17" x2="3" y1="18" y2="18"/></svg></div>
<div class="ic" style="left:329.00px;top:391.36px"><svg width="22" height="22" viewBox="0 0 24 24" fill="none" stroke="currentColor" stroke-width="2" stroke-linecap="round" stroke-linejoin="round" ><line x1="21" x2="3" y1="6" y2="6"/><line x1="15" x2="3" y1="12" y2="12"/><line x1="17" x2="3" y1="18" y2="18"/></svg></div>
<div class="ic" style="left:391.36px;top:391.36px"><svg width="22" height="22" viewBox="0 0 24 24" fill="none" stroke="currentColor" stroke-width="2" stroke-linecap="round" stroke-linejoin="round" ><line x1="21" x2="3" y1="6" y2="6"/><line x1="21" x2="9" y1="12" y2="12"/><line x1="21" x2="7" y1="18" y2="18"/></svg></div>
<div class="ic" style="left:453.73px;top:391.36px"><svg width="22" height="22" viewBox="0 0 24 24" fill="none" stroke="currentColor" stroke-width="2" stroke-linecap="round" stroke-linejoin="round" ><line x1="21" x2="3" y1="6" y2="6"/><line x1="21" x2="9" y1="12" y2="12"/><line x1="21" x2="7" y1="18" y2="18"/></svg></div>
<div class="ic" style="left:516.09px;top:391.36px"><svg width="22" height="22" viewBox="0 0 24 24" fill="none" stroke="currentColor" stroke-width="2" stroke-linecap="round" stroke-linejoin="round" ><rect width="6" height="16" x="4" y="6" rx="2"/><rect width="6" height="9" x="14" y="6" rx="2"/><path d="M22 2H2"/></svg></div>
<div class="ic" style="left:578.45px;top:391.36px"><svg width="22" height="22" viewBox="0 0 24 24" fill="none" stroke="currentColor" stroke-width="2" stroke-linecap="round" stroke-linejoin="round" ><rect width="6" height="16" x="4" y="6" rx="2"/><rect width="6" height="9" x="14" y="6" rx="2"/><path d="M22 2H2"/></svg></div>
<div class="ic" style="left:640.82px;top:391.36px"><svg width="22" height="22" viewBox="0 0 24 24" fill="none" stroke="currentColor" stroke-width="2" stroke-linecap="round" stroke-linejoin="round" ><rect width="9" height="6" x="6" y="14" rx="2"/><rect width="16" height="6" x="6" y="4" rx="2"/><path d="M2 2v20"/></svg></div>
<div class="ic" style="left:17.18px;top:453.73px"><svg width="22" height="22" viewBox="0 0 24 24" fill="none" stroke="currentColor" stroke-width="2" stroke-linecap="round" stroke-linejoin="round" ><rect width="9" height="6" x="6" y="14" rx="2"/><rect width="16" height="6" x="6" y="4" rx="2"/><path d="M2 2v20"/></svg></div>
<div class="ic" style="left:79.55px;top:453.73px"><svg width="22" height="22" viewBox="0 0 24 24" fill="none" stroke="currentColor" stroke-width="2" stroke-linecap="round" stroke-linejoin="round" ><rect width="14" height="6" x="5" y="14" rx="2"/><rect width="10" height="6" x="7" y="4" rx="2"/><path d="M22 7h-5"/><path d="M7 7H2"/><path d="M22 17h-3"/><path d="M5 17H2"/></svg></div>
<div class="ic" style="left:141.91px;top:453.73px"><svg width="22" height="22" viewBox="0 0 24 24" fill="none" stroke="currentColor" stroke-width="2" stroke-linecap="round" stroke-linejoin="round" ><rect width="14" height="6" x="5" y="14" rx="2"/><rect width="10" height="6" x="7" y="4" rx="2"/><path d="M22 7h-5"/><path d="M7 7H2"/><path d="M22 17h-3"/><path d="M5 17H2"/></svg></div>
<div class="ic" style="left:204.27px;top:453.73px"><svg width="22" height="22" viewBox="0 0 24 24" fill="none" stroke="currentColor" stroke-width="2" stroke-linecap="round" stroke-linejoin="round" ><rect width="14" height="6" x="5" y="14" rx="2"/><rect width="10" height="6" x="7" y="4" rx="2"/><path d="M2 20h20"/><path d="M2 10h20"/></svg></div>
<div class="ic" style="left:266.64px;top:453.73px"><svg width="22" height="22" viewBox="0 0 24 24" fill="none" stroke="currentColor" stroke-width="2" stroke-linecap="round" stroke-linejoin="round" ><rect width="14" height="6" x="5" y="14" rx="2"/><rect width="10" height="6" x="7" y="4" rx="2"/><path d="M2 20h20"/><path d="M2 10h20"/></svg></div>
<div class="ic" style="left:329.00px;top:453.73px"><svg width="22" height="22" viewBox="0 0 24 24" fill="none" stroke="currentColor" stroke-width="2" stroke-linecap="round" stroke-linejoin="round" ><rect width="14" height="6" x="5" y="14" rx="2"/><rect width="10" height="6" x="7" y="4" rx="2"/><path d="M2 14h20"/><path d="M2 4h20"/></svg></div>
<div class="ic" style="left:391.36px;top:453.73px"><svg width="22" height="22" viewBox="0 0 24 24" fill="none" stroke="currentColor" stroke-width="2" stroke-linecap="round" stroke-linejoin="round" ><rect width="14" height="6" x="5" y="14" rx="2"/><rect width="10" height="6" x="7" y="4" rx="2"/><path d="M2 14h20"/><path d="M2 4h20"/></svg></div>
<div class="ic" style="left:453.73px;top:453.73px"><svg width="22" height="22" viewBox="0 0 24 24" fill="none" stroke="currentColor" stroke-width="2" stroke-linecap="round" stroke-linejoin="round" ><rect width="14" height="6" x="5" y="16" rx="2"/><rect width="10" height="6" x="7" y="2" rx="2"/><path d="M2 12h20"/></svg></div>
<div class="ic" style="left:516.09px;top:453.73px"><svg width="22" height="22" viewBox="0 0 24 24" fill="none" stroke="currentColor" stroke-width="2" stroke-linecap="round" stroke-linejoin="round" ><rect width="14" height="6" x="5" y="16" rx="2"/><rect width="10" height="6" x="7" y="2" rx="2"/><path d="M2 12h20"/></svg></div>
<div class="ic" style="left:578.45px;top:453.73px"><svg width="22" height="22" viewBox="0 0 24 24" fill="none" stroke="currentColor" stroke-width="2" stroke-linecap="round" stroke-linejoin="round" ><rect width="14" height="6" x="5" y="12" rx="2"/><rect width="10" height="6" x="7" y="2" rx="2"/><path d="M2 22h20"/></svg></div>
<div class="ic" style="left:640.82px;top:453.73px"><svg width="22" height="22" viewBox="0 0 24 24" fill="none" stroke="currentColor" stroke-width="2" stroke-linecap="round" stroke-linejoin="round" ><rect width="14" height="6" x="5" y="12" rx="2"/><rect width="10" height="6" x="7" y="2" rx="2"/><path d="M2 22h20"/></svg></div>
<div class="ic" style="left:17.18px;top:516.09px"><svg width="22" height="22" viewBox="0 0 24 24" fill="none" stroke="currentColor" stroke-width="2" stroke-linecap="round" stroke-linejoin="round" ><rect width="14" height="6" x="5" y="16" rx="2"/><rect width="10" height="6" x="7" y="6" rx="2"/><path d="M2 2h20"/></svg></div>
<div class="ic" style="left:79.55px;top:516.09px"><svg width="22" height="22" viewBox="0 0 24 24" fill="none" stroke="currentColor" stroke-width="2" stroke-linecap="round" stroke-linejoin="round" ><rect width="14" height="6" x="5" y="16" rx="2"/><rect width="10" height="6" x="7" y="6" rx="2"/><path d="M2 2h20"/></svg></div>
<div class="ic" style="left:141.91px;top:516.09px"><svg width="22" height="22" viewBox="0 0 24 24" fill="none" stroke="currentColor" stroke-width="2" stroke-linecap="round" stroke-linejoin="round" ><rect width="10" height="6" x="7" y="9" rx="2"/><path d="M22 20H2"/><path d="M22 4H2"/></svg></div>
<div class="ic" style="left:204.27px;top:516.09px"><svg width="22" height="22" viewBox="0 0 24 24" fill="none" stroke="currentColor" stroke-width="2" stroke-linecap="round" stroke-linejoin="round" ><rect width="10" height="6" x="7" y="9" rx="2"/><path d="M22 20H2"/><path d="M22 4H2"/></svg></div>
<div class="ic" style="left:266.64px;top:516.09px"><svg width="22" height="22" viewBox="0 0 24 24" fill="none" stroke="currentColor" stroke-width="2" stroke-linecap="round" stroke-linejoin="round" ><rect width="14" height="6" x="5" y="15" rx="2"/><rect width="10" height="6" x="7" y="3" rx="2"/><path d="M2 21h20"/><path d="M2 3h20"/></svg></div>
<div class="ic" style="left:329.00px;top:516.09px"><svg width="22" height="22" viewBox="0 0 24 24" fill="none" stroke="currentColor" stroke-width="2" stroke-linecap="round" stroke-linejoin="round" ><rect width="14" height="6" x="5" y="15" rx="2"/><rect width="10" height="6" x="7" y="3" rx="2"/><path d="M2 21h20"/><path d="M2 3h20"/></svg></div>
<div class="ic" style="left:391.36px;top:516.09px"><svg width="22" height="22" viewBox="0 0 24 24" fill="none" stroke="currentColor" stroke-width="2" stroke-linecap="round" stroke-linejoin="round" ><path d="M10 10H6"/><path d="M14 18V6a2 2 0 0 0-2-2H4a2 2 0 0 0-2 2v11a1 1 0 0 0 1 1h2"/><path d="M19 18h2a1 1 0 0 0 1-1v-3.28a1 1 0 0 0-.684-.948l-1.923-.641a1 1 0 0 1-.578-.502l-1.539-3.076A1 1 0 0 0 16.382 8H14"/><path d="M8 8v4"/><path d="M9 18h6"/><circle cx="17" cy="18" r="2"/><circle cx="7" cy="18" r="2"/></svg></div>
<div class="ic" style="left:453.73px;top:516.09px"><svg width="22" height="22" viewBox="0 0 24 24" fill="none" stroke="currentColor" stroke-width="2" stroke-linecap="round" stroke-linejoin="round" ><path d="M10 10H6"/><path d="M14 18V6a2 2 0 0 0-2-2H4a2 2 0 0 0-2 2v11a1 1 0 0 0 1 1h2"/><path d="M19 18h2a1 1 0 0 0 1-1v-3.28a1 1 0 0 0-.684-.948l-1.923-.641a1 1 0 0 1-.578-.502l-1.539-3.076A1 1 0 0 0 16.382 8H14"/><path d="M8 8v4"/><path d="M9 18h6"/><circle cx="17" cy="18" r="2"/><circle cx="7" cy="18" r="2"/></svg></div>
<div class="ic" style="left:516.09px;top:516.09px"><svg width="22" height="22" viewBox="0 0 24 24" fill="none" stroke="currentColor" stroke-width="2" stroke-linecap="round" stroke-linejoin="round" ><path d="M17.5 12c0 4.4-3.6 8-8 8A4.5 4.5 0 0 1 5 15.5c0-6 8-4 8-8.5a3 3 0 1 0-6 0c0 3 2.5 8.5 12 13"/><path d="M16 12h3"/></svg></div>
<div class="ic" style="left:578.45px;top:516.09px"><svg width="22" height="22" viewBox="0 0 24 24" fill="none" stroke="currentColor" stroke-width="2" stroke-linecap="round" stroke-linejoin="round" ><path d="M17.5 12c0 4.4-3.6 8-8 8A4.5 4.5 0 0 1 5 15.5c0-6 8-4 8-8.5a3 3 0 1 0-6 0c0 3 2.5 8.5 12 13"/><path d="M16 12h3"/></svg></div>
<div class="ic" style="left:640.82px;top:516.09px"><svg width="22" height="22" viewBox="0 0 24 24" fill="none" stroke="currentColor" stroke-width="2" stroke-linecap="round" stroke-linejoin="round" ><path d="M10 17c-5-3-7-7-7-9a2 2 0 0 1 4 0c0 2.5-5 2.5-5 6 0 1.7 1.3 3 3 3 2.8 0 5-2.2 5-5"/><path d="M22 17c-5-3-7-7-7-9a2 2 0 0 1 4 0c0 2.5-5 2.5-5 6 0 1.7 1.3 3 3 3 2.8 0 5-2.2 5-5"/></svg></div>
<div class="ic" style="left:17.18px;top:578.45px"><svg width="22" height="22" viewBox="0 0 24 24" fill="none" stroke="currentColor" stroke-width="2" stroke-linecap="round" stroke-linejoin="round" ><path d="M10 17c-5-3-7-7-7-9a2 2 0 0 1 4 0c0 2.5-5 2.5-5 6 0 1.7 1.3 3 3 3 2.8 0 5-2.2 5-5"/><path d="M22 17c-5-3-7-7-7-9a2 2 0 0 1 4 0c0 2.5-5 2.5-5 6 0 1.7 1.3 3 3 3 2.8 0 5-2.2 5-5"/></svg></div>
<div class="ic" style="left:79.55px;top:578.45px"><svg width="22" height="22" viewBox="0 0 24 24" fill="none" stroke="currentColor" stroke-width="2" stroke-linecap="round" stroke-linejoin="round" ><path d="M10 2v5.632c0 .424-.272.795-.653.982A6 6 0 0 0 6 14c.006 4 3 7 5 8"/><path d="M10 5H8a2 2 0 0 0 0 4h.68"/><path d="M14 2v5.632c0 .424.272.795.652.982A6 6 0 0 1 18 14c0 4-3 7-5 8"/><path d="M14 5h2a2 2 0 0 1 0 4h-.68"/><path d="M18 22H6"/><path d="M9 2h6"/></svg></div>
<div class="ic" style="left:141.91px;top:578.45px"><svg width="22" height="22" viewBox="0 0 24 24" fill="none" stroke="currentColor" stroke-width="2" stroke-linecap="round" stroke-linejoin="round" ><path d="M10 2v5.632c0 .424-.272.795-.653.982A6 6 0 0 0 6 14c.006 4 3 7 5 8"/><path d="M10 5H8a2 2 0 0 0 0 4h.68"/><path d="M14 2v5.632c0 .424.272.795.652.982A6 6 0 0 1 18 14c0 4-3 7-5 8"/><path d="M14 5h2a2 2 0 0 1 0 4h-.68"/><path d="M18 22H6"/><path d="M9 2h6"/></svg></div>
<div class="ic" style="left:204.27px;top:578.45px"><svg width="22" height="22" viewBox="0 0 24 24" fill="none" stroke="currentColor" stroke-width="2" stroke-linecap="round" stroke-linejoin="round" ><path d="M12 22V8"/><path d="M5 12H2a10 10 0 0 0 20 0h-3"/><circle cx="12" cy="5" r="3"/></svg></div>
<div class="ic" style="left:266.64px;top:578.45px"><svg width="22" height="22" viewBox="0 0 24 24" fill="none" stroke="currentColor" stroke-width="2" stroke-linecap="round" stroke-linejoin="round" ><path d="M12 22V8"/><path d="M5 12H2a10 10 0 0 0 20 0h-3"/><circle cx="12" cy="5" r="3"/></svg></div>
<div class="ic" style="left:329.00px;top:578.45px"><svg width="22" height="22" viewBox="0 0 24 24" fill="none" stroke="currentColor" stroke-width="2" stroke-linecap="round" stroke-linejoin="round" ><circle cx="12" cy="12" r="10"/><path d="M16 16s-1.5-2-4-2-4 2-4 2"/><path d="M7.5 8 10 9"/><path d="m14 9 2.5-1"/><path d="M9 10h.01"/><path d="M15 10h.01"/></svg></div>
<div class="ic" style="left:391.36px;top:578.45px"><svg width="22" height="22" viewBox="0 0 24 24" fill="none" stroke="currentColor" stroke-width="2" stroke-linecap="round" stroke-linejoin="round" ><circle cx="12" cy="12" r="10"/><path d="M16 16s-1.5-2-4-2-4 2-4 2"/><path d="M7.5 8 10 9"/><path d="m14 9 2.5-1"/><path d="M9 10h.01"/><path d="M15 10h.01"/></svg></div>
<div class="ic" style="left:453.73px;top:578.45px"><svg width="22" height="22" viewBox="0 0 24 24" fill="none" stroke="currentColor" stroke-width="2" stroke-linecap="round" stroke-linejoin="round" ><circle cx="12" cy="12" r="10"/><path d="M8 15h8"/><path d="M8 9h2"/><path d="M14 9h2"/></svg></div>
<div class="ic" style="left:516.09px;top:578.45px"><svg width="22" height="22" viewBox="0 0 24 24" fill="none" stroke="currentColor" stroke-width="2" stroke-linecap="round" stroke-linejoin="round" ><circle cx="12" cy="12" r="10"/><path d="M8 15h8"/><path d="M8 9h2"/><path d="M14 9h2"/></svg></div>
<div class="ic" style="left:578.45px;top:578.45px"><svg width="22" height="22" viewBox="0 0 24 24" fill="none" stroke="currentColor" stroke-width="2" stroke-linecap="round" stroke-linejoin="round" ><path d="M2 12 7 2"/><path d="m7 12 5-10"/><path d="m12 12 5-10"/><path d="m17 12 5-10"/><path d="M4.5 7h15"/><path d="M12 16v6"/></svg></div>
<div class="ic" style="left:640.82px;top:578.45px"><svg width="22" height="22" viewBox="0 0 24 24" fill="none" stroke="currentColor" stroke-width="2" stroke-linecap="round" stroke-linejoin="round" ><path d="M2 12 7 2"/><path d="m7 12 5-10"/><path d="m12 12 5-10"/><path d="m17 12 5-10"/><path d="M4.5 7h15"/><path d="M12 16v6"/></svg></div>
<div class="ic" style="left:17.18px;top:640.82px"><svg width="22" height="22" viewBox="0 0 24 24" fill="none" stroke="currentColor" stroke-width="2" stroke-linecap="round" stroke-linejoin="round" ><path d="M7 10H6a4 4 0 0 1-4-4 1 1 0 0 1 1-1h4"/><path d="M7 5a1 1 0 0 1 1-1h13a1 1 0 0 1 1 1 7 7 0 0 1-7 7H8a1 1 0 0 1-1-1z"/><path d="M9 12v5"/><path d="M15 12v5"/><path d="M5 20a3 3 0 0 1 3-3h8a3 3 0 0 1 3 3 1 1 0 0 1-1 1H6a1 1 0 0 1-1-1"/></svg></div>
<div class="ic" style="left:79.55px;top:640.82px"><svg width="22" height="22" viewBox="0 0 24 24" fill="none" stroke="currentColor" stroke-width="2" stroke-linecap="round" stroke-linejoin="round" ><path d="M7 10H6a4 4 0 0 1-4-4 1 1 0 0 1 1-1h4"/><path d="M7 5a1 1 0 0 1 1-1h13a1 1 0 0 1 1 1 7 7 0 0 1-7 7H8a1 1 0 0 1-1-1z"/><path d="M9 12v5"/><path d="M15 12v5"/><path d="M5 20a3 3 0 0 1 3-3h8a3 3 0 0 1 3 3 1 1 0 0 1-1 1H6a1 1 0 0 1-1-1"/></svg></div>
<div class="ic" style="left:141.91px;top:640.82px"><svg width="22" height="22" viewBox="0 0 24 24" fill="none" stroke="currentColor" stroke-width="2" stroke-linecap="round" stroke-linejoin="round" ><circle cx="12" cy="12" r="10"/><path d="m14.31 8 5.74 9.94"/><path d="M9.69 8h11.48"/><path d="m7.38 12 5.74-9.94"/><path d="M9.69 16 3.95 6.06"/><path d="M14.31 16H2.83"/><path d="m16.62 12-5.74 9.94"/></svg></div>
<div class="ic" style="left:204.27px;top:640.82px"><svg width="22" height="22" viewBox="0 0 24 24" fill="none" stroke="currentColor" stroke-width="2" stroke-linecap="round" stroke-linejoin="round" ><circle cx="12" cy="12" r="10"/><path d="m14.31 8 5.74 9.94"/><path d="M9.69 8h11.48"/><path d="m7.38 12 5.74-9.94"/><path d="M9.69 16 3.95 6.06"/><path d="M14.31 16H2.83"/><path d="m16.62 12-5.74 9.94"/></svg></div>
<div class="ic" style="left:266.64px;top:640.82px"><svg width="22" height="22" viewBox="0 0 24 24" fill="none" stroke="currentColor" stroke-width="2" stroke-linecap="round" stroke-linejoin="round" ><path d="M12 20.94c1.5 0 2.75 1.06 4 1.06 3 0 6-8 6-12.22A4.91 4.91 0 0 0 17 5c-2.22 0-4 1.44-5 2-1-.56-2.78-2-5-2a4.9 4.9 0 0 0-5 4.78C2 14 5 22 8 22c1.25 0 2.5-1.06 4-1.06Z"/><path d="M10 2c1 .5 2 2 2 5"/></svg></div>
<div class="ic" style="left:329.00px;top:640.82px"><svg width="22" height="22" viewBox="0 0 24 24" fill="none" stroke="currentColor" stroke-width="2" stroke-linecap="round" stroke-linejoin="round" ><path d="M12 20.94c1.5 0 2.75 1.06 4 1.06 3 0 6-8 6-12.22A4.91 4.91 0 0 0 17 5c-2.22 0-4 1.44-5 2-1-.56-2.78-2-5-2a4.9 4.9 0 0 0-5 4.78C2 14 5 22 8 22c1.25 0 2.5-1.06 4-1.06Z"/><path d="M10 2c1 .5 2 2 2 5"/></svg></div>
<div class="ic" style="left:391.36px;top:640.82px"><svg width="22" height="22" viewBox="0 0 24 24" fill="none" stroke="currentColor" stroke-width="2" stroke-linecap="round" stroke-linejoin="round" ><rect x="2" y="4" width="20" height="16" rx="2"/><path d="M10 4v4"/><path d="M2 8h20"/><path d="M6 4v4"/></svg></div>
<div class="ic" style="left:453.73px;top:640.82px"><svg width="22" height="22" viewBox="0 0 24 24" fill="none" stroke="currentColor" stroke-width="2" stroke-linecap="round" stroke-linejoin="round" ><rect x="2" y="4" width="20" height="16" rx="2"/><path d="M10 4v4"/><path d="M2 8h20"/><path d="M6 4v4"/></svg></div>
<div class="ic" style="left:516.09px;top:640.82px"><svg width="22" height="22" viewBox="0 0 24 24" fill="none" stroke="currentColor" stroke-width="2" stroke-linecap="round" stroke-linejoin="round" ><rect width="20" height="16" x="2" y="4" rx="2"/><path d="M6 8h.01"/><path d="M10 8h.01"/><path d="M14 8h.01"/></svg></div>
<div class="ic" style="left:578.45px;top:640.82px"><svg width="22" height="22" viewBox="0 0 24 24" fill="none" stroke="currentColor" stroke-width="2" stroke-linecap="round" stroke-linejoin="round" ><rect width="20" height="16" x="2" y="4" rx="2"/><path d="M6 8h.01"/><path d="M10 8h.01"/><path d="M14 8h.01"/></svg></div>
<div class="ic" style="left:640.82px;top:640.82px"><svg width="22" height="22" viewBox="0 0 24 24" fill="none" stroke="currentColor" stroke-width="2" stroke-linecap="round" stroke-linejoin="round" ><rect width="20" height="5" x="2" y="3" rx="1"/><path d="M4 8v11a2 2 0 0 0 2 2h12a2 2 0 0 0 2-2V8"/><path d="M10 12h4"/></svg></div>
<div class="ic" style="left:17.18px;top:703.18px"><svg width="22" height="22" viewBox="0 0 24 24" fill="none" stroke="currentColor" stroke-width="2" stroke-linecap="round" stroke-linejoin="round" ><rect width="20" height="5" x="2" y="3" rx="1"/><path d="M4 8v11a2 2 0 0 0 2 2h12a2 2 0 0 0 2-2V8"/><path d="M10 12h4"/></svg></div>
<div class="ic" style="left:79.55px;top:703.18px"><svg width="22" height="22" viewBox="0 0 24 24" fill="none" stroke="currentColor" stroke-width="2" stroke-linecap="round" stroke-linejoin="round" ><rect width="20" height="5" x="2" y="3" rx="1"/><path d="M4 8v11a2 2 0 0 0 2 2h2"/><path d="M20 8v11a2 2 0 0 1-2 2h-2"/><path d="m9 15 3-3 3 3"/><path d="M12 12v9"/></svg></div>
<div class="ic" style="left:141.91px;top:703.18px"><svg width="22" height="22" viewBox="0 0 24 24" fill="none" stroke="currentColor" stroke-width="2" stroke-linecap="round" stroke-linejoin="round" ><rect width="20" height="5" x="2" y="3" rx="1"/><path d="M4 8v11a2 2 0 0 0 2 2h2"/><path d="M20 8v11a2 2 0 0 1-2 2h-2"/><path d="m9 15 3-3 3 3"/><path d="M12 12v9"/></svg></div>
<div class="ic" style="left:204.27px;top:703.18px"><svg width="22" height="22" viewBox="0 0 24 24" fill="none" stroke="currentColor" stroke-width="2" stroke-linecap="round" stroke-linejoin="round" ><rect width="20" height="5" x="2" y="3" rx="1"/><path d="M4 8v11a2 2 0 0 0 2 2h12a2 2 0 0 0 2-2V8"/><path d="m9.5 17 5-5"/><path d="m9.5 12 5 5"/></svg></div>
<div class="ic" style="left:266.64px;top:703.18px"><svg width="22" height="22" viewBox="0 0 24 24" fill="none" stroke="currentColor" stroke-width="2" stroke-linecap="round" stroke-linejoin="round" ><rect width="20" height="5" x="2" y="3" rx="1"/><path d="M4 8v11a2 2 0 0 0 2 2h12a2 2 0 0 0 2-2V8"/><path d="m9.5 17 5-5"/><path d="m9.5 12 5 5"/></svg></div>
<div class="ic" style="left:329.00px;top:703.18px"><svg width="22" height="22" viewBox="0 0 24 24" fill="none" stroke="currentColor" stroke-width="2" stroke-linecap="round" stroke-linejoin="round" ><path d="M3 3v18h18"/><path d="M7 12v5h12V8l-5 5-4-4Z"/></svg></div>
<div class="ic" style="left:391.36px;top:703.18px"><svg width="22" height="22" viewBox="0 0 24 24" fill="none" stroke="currentColor" stroke-width="2" stroke-linecap="round" stroke-linejoin="round" ><path d="M3 3v18h18"/><path d="M7 12v5h12V8l-5 5-4-4Z"/></svg></div>
<div class="ic" style="left:453.73px;top:703.18px"><svg width="22" height="22" viewBox="0 0 24 24" fill="none" stroke="currentColor" stroke-width="2" stroke-linecap="round" stroke-linejoin="round" ><path d="M19 9V6a2 2 0 0 0-2-2H7a2 2 0 0 0-2 2v3"/><path d="M3 16a2 2 0 0 0 2 2h14a2 2 0 0 0 2-2v-5a2 2 0 0 0-4 0v1.5a.5.5 0 0 1-.5.5h-9a.5.5 0 0 1-.5-.5V11a2 2 0 0 0-4 0z"/><path d="M5 18v2"/><path d="M19 18v2"/></svg></div>
<div class="ic" style="left:516.09px;top:703.18px"><svg width="22" height="22" viewBox="0 0 24 24" fill="none" stroke="currentColor" stroke-width="2" stroke-linecap="round" stroke-linejoin="round" ><path d="M19 9V6a2 2 0 0 0-2-2H7a2 2 0 0 0-2 2v3"/><path d="M3 16a2 2 0 0 0 2 2h14a2 2 0 0 0 2-2v-5a2 2 0 0 0-4 0v1.5a.5.5 0 0 1-.5.5h-9a.5.5 0 0 1-.5-.5V11a2 2 0 0 0-4 0z"/><path d="M5 18v2"/><path d="M19 18v2"/></svg></div>
<div class="ic" style="left:578.45px;top:703.18px"><svg width="22" height="22" viewBox="0 0 24 24" fill="none" stroke="currentColor" stroke-width="2" stroke-linecap="round" stroke-linejoin="round" ><path d="M15 6v6h4l-7 7-7-7h4V6h6z"/></svg></div>
<div class="ic" style="left:640.82px;top:703.18px"><svg width="22" height="22" viewBox="0 0 24 24" fill="none" stroke="currentColor" stroke-width="2" stroke-linecap="round" stroke-linejoin="round" ><path d="M15 5H9"/><path d="M15 9v3h4l-7 7-7-7h4V9z"/></svg></div>
<div class="ic" style="left:17.18px;top:765.55px"><svg width="22" height="22" viewBox="0 0 24 24" fill="none" stroke="currentColor" stroke-width="2" stroke-linecap="round" stroke-linejoin="round" ><path d="M15 5H9"/><path d="M15 9v3h4l-7 7-7-7h4V9z"/></svg></div>
<div class="ic" style="left:79.55px;top:765.55px"><svg width="22" height="22" viewBox="0 0 24 24" fill="none" stroke="currentColor" stroke-width="2" stroke-linecap="round" stroke-linejoin="round" ><path d="M15 6v6h4l-7 7-7-7h4V6h6z"/></svg></div>
<div class="ic" style="left:141.91px;top:765.55px"><svg width="22" height="22" viewBox="0 0 24 24" fill="none" stroke="currentColor" stroke-width="2" stroke-linecap="round" stroke-linejoin="round" ><path d="M18 15h-6v4l-7-7 7-7v4h6v6z"/></svg></div>
<div class="ic" style="left:204.27px;top:765.55px"><svg width="22" height="22" viewBox="0 0 24 24" fill="none" stroke="currentColor" stroke-width="2" stroke-linecap="round" stroke-linejoin="round" ><path d="M19 15V9"/><path d="M15 15h-3v4l-7-7 7-7v4h3v6z"/></svg></div>
<div class="ic" style="left:266.64px;top:765.55px"><svg width="22" height="22" viewBox="0 0 24 24" fill="none" stroke="currentColor" stroke-width="2" stroke-linecap="round" stroke-linejoin="round" ><path d="M19 15V9"/><path d="M15 15h-3v4l-7-7 7-7v4h3v6z"/></svg></div>
<div class="ic" style="left:329.00px;top:765.55px"><svg width="22" height="22" viewBox="0 0 24 24" fill="none" stroke="currentColor" stroke-width="2" stroke-linecap="round" stroke-linejoin="round" ><path d="M18 15h-6v4l-7-7 7-7v4h6v6z"/></svg></div>
<div class="ic" style="left:391.36px;top:765.55px"><svg width="22" height="22" viewBox="0 0 24 24" fill="none" stroke="currentColor" stroke-width="2" stroke-linecap="round" stroke-linejoin="round" ><path d="M6 9h6V5l7 7-7 7v-4H6V9z"/></svg></div>
<div class="ic" style="left:453.73px;top:765.55px"><svg width="22" height="22" viewBox="0 0 24 24" fill="none" stroke="currentColor" stroke-width="2" stroke-linecap="round" stroke-linejoin="round" ><path d="M5 9v6"/><path d="M9 9h3V5l7 7-7 7v-4H9V9z"/></svg></div>
<div class="ic" style="left:516.09px;top:765.55px"><svg width="22" height="22" viewBox="0 0 24 24" fill="none" stroke="currentColor" stroke-width="2" stroke-linecap="round" stroke-linejoin="round" ><path d="M5 9v6"/><path d="M9 9h3V5l7 7-7 7v-4H9V9z"/></svg></div>
<div class="ic" style="left:578.45px;top:765.55px"><svg width="22" height="22" viewBox="0 0 24 24" fill="none" stroke="currentColor" stroke-width="2" stroke-linecap="round" stroke-linejoin="round" ><path d="M6 9h6V5l7 7-7 7v-4H6V9z"/></svg></div>
<div class="ic" style="left:640.82px;top:765.55px"><svg width="22" height="22" viewBox="0 0 24 24" fill="none" stroke="currentColor" stroke-width="2" stroke-linecap="round" stroke-linejoin="round" ><path d="M9 18v-6H5l7-7 7 7h-4v6H9z"/></svg></div>
</div></div>
<div class="panel"><div style="position:absolute;left:4px;top:0;width:1px;height:956px;background:#0a0b0e"></div><div class="prev"><div class="pbox"><svg width="32" height="32" viewBox="0 0 24 24" fill="none" stroke="#35383f" stroke-width="1.5" stroke-linecap="round" stroke-linejoin="round" ><path d="M11.017 2.814a1 1 0 0 1 1.966 0l1.051 5.558a2 2 0 0 0 1.594 1.594l5.558 1.051a1 1 0 0 1 0 1.966l-5.558 1.051a2 2 0 0 0-1.594 1.594l-1.051 5.558a1 1 0 0 1-1.966 0l-1.051-5.558a2 2 0 0 0-1.594-1.594l-5.558-1.051a1 1 0 0 1 0-1.966l5.558-1.051a2 2 0 0 0 1.594-1.594z"/><path d="M20 2v4"/><path d="M22 4h-4"/><circle cx="4" cy="18.2" r="1.1"/></svg></div>
<div class="sel">Select an icon</div><div class="clk">Click any icon to customize and export</div></div>
<div class="lbl" style="top:214px">COLOR</div>
<div class="sat"><div style="position:absolute;left:-9px;top:-9px;width:17px;height:17px;border-radius:50%;border:2px solid #fff;box-shadow:0 0 2px rgba(0,0,0,.5)"></div></div>
<div class="hue"></div><div class="hknob"></div>
<div class="alpha"></div><div class="aknob"></div>
<div class="swatch"></div><div class="hex">#ffffff</div>
<div class="sw" style="left:16.00px;top:490px;background:#18181b"></div>
<div class="sw" style="left:44.88px;top:490px;background:#4b5563"></div>
<div class="sw" style="left:73.75px;top:490px;background:#9ca3af"></div>
<div class="sw" style="left:101.42px;top:489px;width:26.4px;height:26.4px;background:#ffffff;box-shadow:0 0 0 2px #1e2b4a"></div>
<div class="sw" style="left:131.50px;top:490px;background:#3b82f6"></div>
<div class="sw" style="left:160.38px;top:490px;background:#2563eb"></div>
<div class="sw" style="left:189.25px;top:490px;background:#06b6d4"></div>
<div class="sw" style="left:218.12px;top:490px;background:#8b5cf6"></div>
<div class="sw" style="left:247.00px;top:490px;background:#ec4899"></div>
<div class="sw" style="left:16.00px;top:520px;background:#ef4444"></div>
<div class="sw" style="left:44.88px;top:520px;background:#f97316"></div>
<div class="sw" style="left:73.75px;top:520px;background:#eab308"></div>
<div class="sw" style="left:102.62px;top:520px;background:#84cc16"></div>
<div class="sw" style="left:131.50px;top:520px;background:#22c55e"></div>
<div class="sw" style="left:160.38px;top:520px;background:#10b981"></div>
<div class="sw" style="left:189.25px;top:520px;background:#14b8a6"></div>
<div class="sw" style="left:218.12px;top:520px;background:#0ea5e9"></div>
<div class="sw" style="left:247.00px;top:520px;background:#6366f1"></div>
<div class="lbl" style="top:566px">STROKE</div><div class="reset" style="top:566px"><svg width="11" height="11" viewBox="0 0 24 24" fill="none" stroke="#757983" stroke-width="2" stroke-linecap="round" stroke-linejoin="round" ><path d="M3 12a9 9 0 1 0 9-9 9.75 9.75 0 0 0-6.74 2.74L3 8"/><path d="M3 3v5h5"/></svg>Reset</div><div class="track" style="top:599px"></div><div class="knob" style="left:159.4px;top:594px"></div><div class="rng" style="top:618px"><span>0.5</span><b>2.0px</b><span>3.0</span></div>
<div class="lbl" style="top:652.5px">SIZE</div><div class="reset" style="top:652.5px"><svg width="11" height="11" viewBox="0 0 24 24" fill="none" stroke="#757983" stroke-width="2" stroke-linecap="round" stroke-linejoin="round" ><path d="M3 12a9 9 0 1 0 9-9 9.75 9.75 0 0 0-6.74 2.74L3 8"/><path d="M3 3v5h5"/></svg>Reset</div><div class="track" style="top:687px"></div><div class="knob" style="left:71.2px;top:682px"></div><div class="rng" style="top:706px"><span>12</span><b>24px</b><span>64</span></div>
<div class="lbl" style="top:741px">EDITOR</div><div class="reset" style="top:741px"><svg width="11" height="11" viewBox="0 0 24 24" fill="none" stroke="#757983" stroke-width="2" stroke-linecap="round" stroke-linejoin="round" ><path d="M3 12a9 9 0 1 0 9-9 9.75 9.75 0 0 0-6.74 2.74L3 8"/><path d="M3 3v5h5"/></svg>Reset</div>
<div class="eb" style="left:16px;top:767px;width:53px;height:31px"><svg style="left:12px;top:9px" width="13" height="13" viewBox="0 0 24 24" fill="none" stroke="#c9ccd3" stroke-width="2.4" stroke-linecap="round" stroke-linejoin="round"><path d="M21 12a9 9 0 1 1-9-9c2.52 0 4.93 1 6.74 2.74L21 8"/><path d="M21 3v5h-5"/></svg><span style="position:absolute;left:31px;top:9px;font-size:11px;line-height:13px">0&deg;</span></div>
<div class="eb" style="left:77px;top:768px;width:28px;height:28px"><svg style="left:7px;top:7px" width="14" height="14" viewBox="0 0 24 24" fill="none" stroke="#c9ccd3" stroke-width="2" stroke-linecap="round" stroke-linejoin="round"><path d="M8 3H5a2 2 0 0 0-2 2v14c0 1.1.9 2 2 2h3"/><path d="M16 3h3a2 2 0 0 1 2 2v14a2 2 0 0 1-2 2h-3"/><path d="M12 20v2"/><path d="M12 14v2"/><path d="M12 8v2"/><path d="M12 2v2"/></svg></div>
<div class="eb" style="left:113px;top:768px;width:28px;height:28px"><svg style="left:7px;top:7px" width="14" height="14" viewBox="0 0 24 24" fill="none" stroke="#c9ccd3" stroke-width="2" stroke-linecap="round" stroke-linejoin="round"><path d="M21 8V5a2 2 0 0 0-2-2H5a2 2 0 0 0-2 2v3"/><path d="M21 16v3a2 2 0 0 1-2 2H5a2 2 0 0 1-2-2v-3"/><path d="M4 12H2"/><path d="M10 12H8"/><path d="M16 12h-2"/><path d="M22 12h-2"/></svg></div>
<div class="elbl" style="top:812px">Background</div>
<div class="bgb" style="left:16px;width:60px;background:#3b82f6;color:#fff"><svg style="left:10px" width="11" height="11" viewBox="0 0 24 24" fill="none" stroke="#fff" stroke-width="2" stroke-linecap="round" stroke-linejoin="round"><path d="M18 6 6 18"/><path d="m6 6 12 12"/></svg><span style="left:25px">None</span></div>
<div class="bgb" style="left:82px;width:62px"><svg style="left:10px" width="11" height="11" viewBox="0 0 24 24" fill="none" stroke="#70747e" stroke-width="2" stroke-linecap="round" stroke-linejoin="round"><circle cx="12" cy="12" r="10"/></svg><span style="left:26px">Circle</span></div>
<div class="bgb" style="left:150px;width:70px"><svg style="left:10px" width="11" height="11" viewBox="0 0 24 24" fill="none" stroke="#70747e" stroke-width="2" stroke-linecap="round" stroke-linejoin="round"><rect width="18" height="18" x="3" y="3" rx="2"/></svg><span style="left:26px">Square</span></div>
<div class="bgb" style="left:226px;width:78px"><svg style="left:9px" width="12" height="12" viewBox="0 0 24 24" fill="none" stroke="#70747e" stroke-width="2" stroke-linecap="round" stroke-linejoin="round"><rect width="20" height="12" x="2" y="6" rx="4"/></svg><span style="left:25px">Squircle</span></div>
<div class="elbl" style="top:877px">Corner Radius</div>
<div class="track" style="top:908px"></div><div class="knob" style="left:95.7px;top:903px"></div>
<div class="rng" style="top:927px"><span>0</span><b>16px</b><span>48</span></div>
</div>
</div></body></html>
